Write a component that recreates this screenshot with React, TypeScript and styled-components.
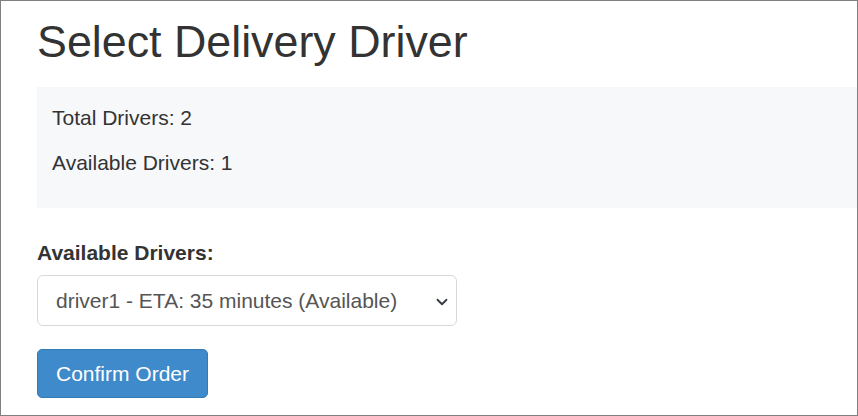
import React from 'react'
import styled, { createGlobalStyle } from 'styled-components'

const GlobalStyle = createGlobalStyle`
  html, body {
    margin: 0;
    padding: 0;
    background: #ffffff;
  }
`

const App = () => {
  return (
    <>
      <GlobalStyle />
      <Frame>
        <Title>Select Delivery Driver</Title>
        <StatsPanel>
          <StatLine>Total Drivers: 2</StatLine>
          <StatLine>Available Drivers: 1</StatLine>
        </StatsPanel>
        <Form>
          <Label htmlFor="driver">Available Drivers:</Label>
          <SelectWrap>
            <DriverSelect id="driver" defaultValue="driver1">
              <option value="driver1">driver1 - ETA: 35 minutes (Available)</option>
            </DriverSelect>
            <Chevron viewBox="0 0 16 16" aria-hidden="true">
              <path d="M2 5l6 6 6-6" fill="none" stroke="#343a40" strokeWidth="2.4" strokeLinecap="round" strokeLinejoin="round" />
            </Chevron>
          </SelectWrap>
          <ConfirmButton type="button">Confirm Order</ConfirmButton>
        </Form>
      </Frame>
    </>
  )
}

export default App

// Outer page with the thin grey frame
const Frame = styled.div`
  width: 858px;
  height: 416px;
  box-sizing: border-box;
  border: 1px solid #808080;
  padding: 14px 0 0 36px;
  overflow: hidden;
  font-family: 'Liberation Sans', Arial, sans-serif;
  color: #333333;
`

const Title = styled.h1`
  margin: 0 0 19px;
  font-size: 44.8px;
  font-weight: 400;
  line-height: 53px;
  color: #333333;
`

// Light summary box
const StatsPanel = styled.div`
  background: #f7f8fa;
  padding: 16px 15px 15px;
`

const StatLine = styled.p`
  margin: 0 0 15px;
  font-size: 21px;
  line-height: 30px;
`

const Form = styled.div`
  display: flex;
  flex-direction: column;
  align-items: flex-start;
  margin-top: 30px;
`

const Label = styled.label`
  font-size: 21px;
  font-weight: 700;
  line-height: 30px;
  margin-bottom: 7px;
`

const SelectWrap = styled.div`
  position: relative;
  width: 420px;
`

const DriverSelect = styled.select`
  appearance: none;
  -webkit-appearance: none;
  display: block;
  width: 100%;
  height: 51px;
  box-sizing: border-box;
  padding: 0 40px 0 18px;
  border: 1px solid #d6d9dc;
  border-radius: 6px;
  background: #ffffff;
  font-family: 'Liberation Sans', Arial, sans-serif;
  font-size: 21px;
  color: #555555;
`

const Chevron = styled.svg`
  position: absolute;
  right: 9px;
  top: 21px;
  width: 12px;
  height: 12px;
  pointer-events: none;
`

const ConfirmButton = styled.button`
  margin-top: 23px;
  height: 49px;
  padding: 0 18px;
  border: 1px solid #3579b5;
  border-radius: 5px;
  background: #3f8acb;
  color: #ffffff;
  font-family: 'Liberation Sans', Arial, sans-serif;
  font-size: 21px;
  line-height: 1;
  cursor: pointer;
`
